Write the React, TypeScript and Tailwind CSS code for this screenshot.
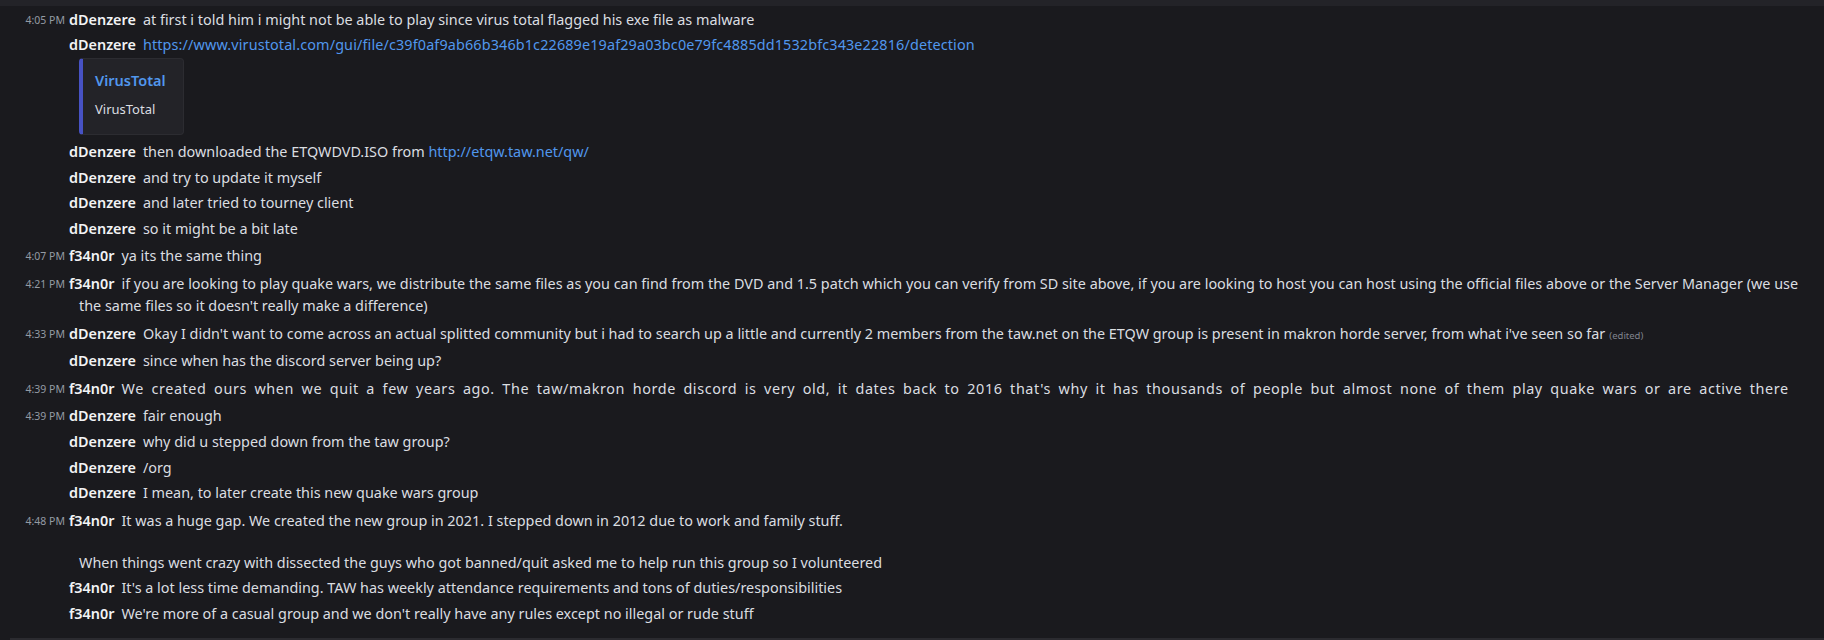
import { ReactNode } from "react"

type Msg = {
  time?: string
  user: string
  body: ReactNode
  edited?: boolean
  embed?: boolean
  loose?: boolean
}

function Link({ href, className = "" }: { href: string; className?: string }) {
  return <span className={"text-[#5197ed] " + className}>{href}</span>
}

function Embed() {
  return (
    <div className="indent-0 mt-[2px] mb-[2px] w-[105px] rounded-[4px] border border-[#2c2c31] border-l-[4px] border-l-[#4752c4] bg-[#232328] pt-[10px] pb-[16px] pl-[12px] pr-[14px]">
      <div className="text-[14.5px] leading-[22px] font-semibold text-[#5197ed]">VirusTotal</div>
      <div className="mt-[9px] text-[13px] leading-[18px] text-[#dbdee1]">VirusTotal</div>
    </div>
  )
}

const messages: Msg[] = [
  {
    time: "4:05 PM",
    user: "dDenzere",
    body: "at first i told him i might not be able to play since virus total flagged his exe file as malware",
  },
  {
    user: "dDenzere",
    body: (
      <Link
        href="https://www.virustotal.com/gui/file/c39f0af9ab66b346b1c22689e19af29a03bc0e79fc4885dd1532bfc343e22816/detection"
        className="tracking-[0.13px]"
      />
    ),
    embed: true,
  },
  {
    user: "dDenzere",
    body: (
      <>
        then downloaded the ETQWDVD.ISO from <Link href="http://etqw.taw.net/qw/" />
      </>
    ),
  },
  { user: "dDenzere", body: "and try to update it myself" },
  { user: "dDenzere", body: "and later tried to tourney client" },
  { user: "dDenzere", body: "so it might be a bit late" },
  { time: "4:07 PM", user: "f34n0r", body: "ya its the same thing" },
  {
    time: "4:21 PM",
    user: "f34n0r",
    body: "if you are looking to play quake wars, we distribute the same files as you can find from the DVD and 1.5 patch which you can verify from SD site above, if you are looking to host you can host using the official files above or the Server Manager (we use the same files so it doesn't really make a difference)",
  },
  {
    time: "4:33 PM",
    user: "dDenzere",
    body: "Okay I didn't want to come across an actual splitted community but i had to search up a little and currently 2 members from the taw.net on the ETQW group is present in makron horde server, from what i've seen so far",
    edited: true,
  },
  { user: "dDenzere", body: "since when has the discord server being up?" },
  {
    time: "4:39 PM",
    user: "f34n0r",
    body: "We created ours when we quit a few years ago. The taw/makron horde discord is very old, it dates back to 2016 that's why it has thousands of people but almost none of them play quake wars or are active there",
    loose: true,
  },
  { time: "4:39 PM", user: "dDenzere", body: "fair enough" },
  { user: "dDenzere", body: "why did u stepped down from the taw group?" },
  { user: "dDenzere", body: "/org" },
  { user: "dDenzere", body: "I mean, to later create this new quake wars group" },
  {
    time: "4:48 PM",
    user: "f34n0r",
    body: (
      <>
        It was a huge gap. We created the new group in 2021. I stepped down in 2012 due to work and family stuff.
        <span className="block indent-0 mt-[20px]">
          When things went crazy with dissected the guys who got banned/quit asked me to help run this group so I volunteered
        </span>
      </>
    ),
  },
  {
    user: "f34n0r",
    body: "It's a lot less time demanding. TAW has weekly attendance requirements and tons of duties/responsibilities",
  },
  {
    user: "f34n0r",
    body: "We're more of a casual group and we don't really have any rules except no illegal or rude stuff",
  },
]

function Message({ msg, first }: { msg: Msg; first: boolean }) {
  return (
    <div
      className={
        "pl-[79px] pr-[4px] -indent-[10px] py-[1.8px] " + (msg.time && !first ? "mt-[2px]" : "")
      }
    >
      {msg.time && (
        <span className="inline-block indent-0 w-[44px] -ml-[48px] mr-[4px] text-right text-[10.5px] leading-[22px] text-[#949ba4] align-top">
          {msg.time}
        </span>
      )}
      <span className="font-semibold text-[#f2f3f5] mr-[7px]">{msg.user}</span>
      <span className={"text-[#dbdee1] " + (msg.loose ? "tracking-[0.6px] [word-spacing:3.2px]" : "")}>
        {msg.body}
      </span>
      {msg.edited && <span className="ml-[4px] text-[9.5px] text-[#80848e]">(edited)</span>}
      {msg.embed && <Embed />}
    </div>
  )
}

export default function App() {
  return (
    <div className="w-[1824px] h-[640px] overflow-hidden bg-[#1a1a1e] flex flex-col font-['Noto_Sans',sans-serif] text-[14.4px] leading-[22px]">
      <div className="h-[6px] shrink-0 bg-[#232328]" />
      <div className="flex-1 pt-[1px]">
        {messages.map((m, i) => (
          <Message key={i} msg={m} first={i === 0} />
        ))}
      </div>
      <div className="h-[2px] shrink-0 ml-[10px] bg-[#2b2b30]" />
    </div>
  )
}
